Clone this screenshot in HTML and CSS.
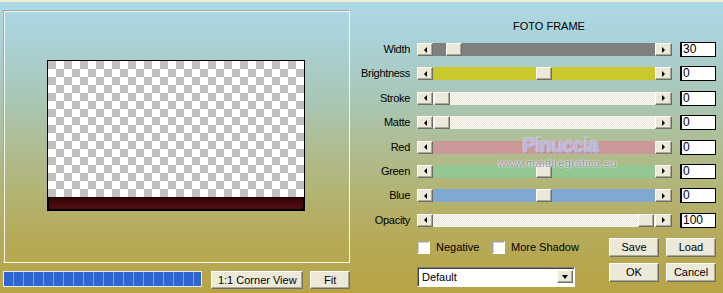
FILE: index.html
```html
<!DOCTYPE html>
<html>
<head>
<meta charset="utf-8">
<link rel="stylesheet" href="styles.css">
</head>
<body>
<div class="app">
  <div class="strip"></div>
  <div class="main">
    <div class="left">
      <div class="preview">
        <div class="img">
          <div class="checker"></div>
          <div class="band"></div>
        </div>
      </div>
      <div class="bottom">
        <div class="progress"></div>
        <button class="btn corner">1:1 Corner View</button>
        <button class="btn fit">Fit</button>
      </div>
    </div>
    <div class="right">
      <div class="title">FOTO FRAME</div>
      <div class="sliders">
        <div class="row">
          <span class="lbl">Width</span>
          <div class="slider"><span class="arr l"></span><div class="track gray"><span class="thumb" style="left:13px"></span></div><span class="arr r"></span></div>
          <div class="val">30</div>
        </div>
        <div class="row">
          <span class="lbl">Brightness</span>
          <div class="slider"><span class="arr l"></span><div class="track yellow"><span class="thumb" style="left:103px"></span></div><span class="arr r"></span></div>
          <div class="val">0</div>
        </div>
        <div class="row">
          <span class="lbl">Stroke</span>
          <div class="slider"><span class="arr l"></span><div class="track hatch"><span class="thumb" style="left:1px"></span></div><span class="arr r"></span></div>
          <div class="val">0</div>
        </div>
        <div class="row">
          <span class="lbl">Matte</span>
          <div class="slider"><span class="arr l"></span><div class="track hatch"><span class="thumb" style="left:1px"></span></div><span class="arr r"></span></div>
          <div class="val">0</div>
        </div>
        <div class="row">
          <span class="lbl">Red</span>
          <div class="slider"><span class="arr l"></span><div class="track red"></div><span class="arr r"></span></div>
          <div class="val">0</div>
        </div>
        <div class="row">
          <span class="lbl">Green</span>
          <div class="slider"><span class="arr l"></span><div class="track green"><span class="thumb" style="left:103px"></span></div><span class="arr r"></span></div>
          <div class="val">0</div>
        </div>
        <div class="row">
          <span class="lbl">Blue</span>
          <div class="slider"><span class="arr l"></span><div class="track blue"><span class="thumb" style="left:103px"></span></div><span class="arr r"></span></div>
          <div class="val">0</div>
        </div>
        <div class="row">
          <span class="lbl">Opacity</span>
          <div class="slider"><span class="arr l"></span><div class="track hatch"><span class="thumb" style="left:205px"></span></div><span class="arr r"></span></div>
          <div class="val">100</div>
        </div>
      </div>
      <div class="opts">
        <div class="checks">
          <label class="chk first"><span class="box"></span>Negative</label>
          <label class="chk"><span class="box"></span>More Shadow</label>
        </div>
        <button class="btn act">Save</button>
        <button class="btn act endb">Load</button>
        <div class="dd"><span class="ddtext">Default</span><span class="ddbtn"></span></div>
        <button class="btn act">OK</button>
        <button class="btn act endb">Cancel</button>
      </div>
    </div>
  </div>
  <div class="wm">
    <div class="wm1">Pinuccia</div>
    <div class="wm2">www.maidiregrafica.eu</div>
  </div>
</div>
</body>
</html>
```
FILE: styles.css
```css
* { box-sizing: border-box; }
html, body { margin: 0; padding: 0; }
body {
  width: 723px;
  height: 293px;
  overflow: hidden;
  font-family: "Liberation Sans", Arial, sans-serif;
  font-size: 11px;
  color: #000;
}
.app {
  position: relative;
  width: 723px;
  height: 293px;
  background: linear-gradient(to bottom, #add9e7 0%, #aad1d6 15%, #a9c6b4 35%, #afbd92 50%, #b3b474 65%, #b6aa58 82%, #b8a445 100%);
}
.strip { height: 2px; background: #f1efd3; }
.main { display: flex; }
.left { width: 350px; padding-left: 3px; padding-top: 8px; }
.preview {
  width: 347px;
  height: 253px;
  border: 1px solid;
  border-color: #a4a6a0 #f8f8f4 #f8f8f4 #a4a6a0;
  box-shadow: inset 1px 1px 0 #f4f4f0;
  padding: 49px 0 0 43px;
}
.img { width: 258px; border: 1px solid #000; }
.checker {
  height: 136px;
  background-image: conic-gradient(#fff 25%, #c0c0c0 0 50%, #fff 0 75%, #c0c0c0 0);
  background-size: 16px 16px;
}
.band {
  height: 13px;
  border: 1px solid #000;
  border-top: 0;
  background: linear-gradient(to bottom, #250204, #4a0a0d 60%, #520d10);
}
.bottom { display: flex; margin-top: 8px; align-items: flex-start; }
.progress {
  width: 201px;
  height: 16px;
  border: 1px solid #e4ecf2;
  background: repeating-linear-gradient(to right, #2d66d2 0 9px, #7da2e0 9px 10px);
}
.btn {
  font-family: "Liberation Sans", Arial, sans-serif;
  font-size: 11px;
  color: #000;
  background: #ece9d8;
  border: 1px solid;
  border-color: #fff #716f64 #716f64 #fff;
  box-shadow: inset -1px -1px 0 #aca899;
  padding: 0;
  margin: 0;
  display: flex;
  align-items: center;
  justify-content: center;
}
.corner { width: 93px; height: 18px; margin-left: 9px; }
.fit { width: 40px; height: 18px; margin-left: 7px; }

.right { width: 373px; }
.title {
  padding-left: 25px;
  padding-top: 18px;
  text-align: center;
  line-height: 13px;
  font-size: 11px;
}
.sliders { display: flex; flex-direction: column; gap: 9.4px; margin-top: 9px; }
.row { display: flex; align-items: center; height: 15px; }
.lbl { width: 67px; padding-right: 7px; text-align: right; line-height: 13px; letter-spacing: -0.3px; }
.slider { display: flex; width: 255px; height: 13px; }
.arr {
  flex: none;
  width: 16px;
  height: 13px;
  background: #ece9d8;
  border: 1px solid;
  border-color: #fff #716f64 #716f64 #fff;
  box-shadow: inset -1px -1px 0 #aca899;
  display: flex;
  align-items: center;
  justify-content: center;
}
.arr.r { width: 17px; }
.arr.l::before {
  content: "";
  border-right: 3px solid #000;
  border-top: 3px solid transparent;
  border-bottom: 3px solid transparent;
}
.arr.r::before {
  content: "";
  border-left: 3px solid #000;
  border-top: 3px solid transparent;
  border-bottom: 3px solid transparent;
}
.track { position: relative; width: 222px; height: 13px; }
.gray { background: #808080; }
.yellow { background: #c9c82c; }
.red { background: #cb9898; }
.green { background: #94c893; }
.blue { background: #7fa8d2; }
.hatch {
  background-image: conic-gradient(#fbfaf3 25%, #e7e5da 0 50%, #fbfaf3 0 75%, #e7e5da 0);
  background-size: 2px 2px;
}
.thumb {
  position: absolute;
  top: 0;
  width: 16px;
  height: 13px;
  background: #ece9d8;
  border: 1px solid;
  border-color: #fff #716f64 #716f64 #fff;
  box-shadow: inset -1px -1px 0 #aca899;
}
.val {
  margin-left: 8px;
  width: 36px;
  height: 15px;
  background: #fff;
  border: 1px solid #000;
  border-left-width: 2px;
  font-size: 12px;
  line-height: 13px;
  padding-left: 1px;
}

.opts {
  display: grid;
  grid-template-columns: 192px 50px 57px;
  grid-template-rows: 19px 19px;
  row-gap: 6px;
  margin-left: 67px;
  margin-top: 10px;
}
.checks { display: flex; align-items: center; }
.chk { display: flex; align-items: center; gap: 6px; font-size: 11px; }
.chk.first { width: 75px; }
.box {
  width: 13px;
  height: 13px;
  background: #fff;
  border: 1px solid;
  border-color: #a0a098 #fff #fff #a0a098;
  box-shadow: inset 1px 1px 0 #d8d6cc;
}
.act { width: 50px; height: 19px; }
.endb { justify-self: end; }
.dd {
  width: 158px;
  height: 20px;
  margin-top: 4px;
  background: #fff;
  border: 1px solid;
  border-color: #808080 #fff #fff #808080;
  box-shadow: inset 1px 1px 0 #404040;
  display: flex;
  align-items: center;
  justify-content: space-between;
  padding: 0 1px 0 4px;
}
.ddtext { font-size: 11px; }
.ddbtn {
  width: 16px;
  height: 13px;
  background: #ece9d8;
  border: 1px solid;
  border-color: #fff #716f64 #716f64 #fff;
  box-shadow: inset -1px -1px 0 #aca899;
  display: flex;
  align-items: center;
  justify-content: center;
}
.ddbtn::before {
  content: "";
  border-top: 4px solid #000;
  border-left: 3.5px solid transparent;
  border-right: 3.5px solid transparent;
  margin-top: 1px;
}
.wm { position: absolute; left: 495px; top: 133px; width: 125px; text-align: center; pointer-events: none; }
.wm1 {
  font-size: 20px;
  font-weight: bold;
  letter-spacing: -0.8px;
  color: #bcb6da;
  line-height: 24px;
  padding-left: 6px;
  text-shadow: 0 0 2px #fff, 1px 1px 0 #8d86ac;
}
.wm2 {
  font-size: 11px;
  color: #8e8ea6;
  letter-spacing: 0.4px;
  line-height: 12px;
  margin-top: 0;
  text-shadow: 0 0 2px #fff, 0 0 1px #fff;
}
```
